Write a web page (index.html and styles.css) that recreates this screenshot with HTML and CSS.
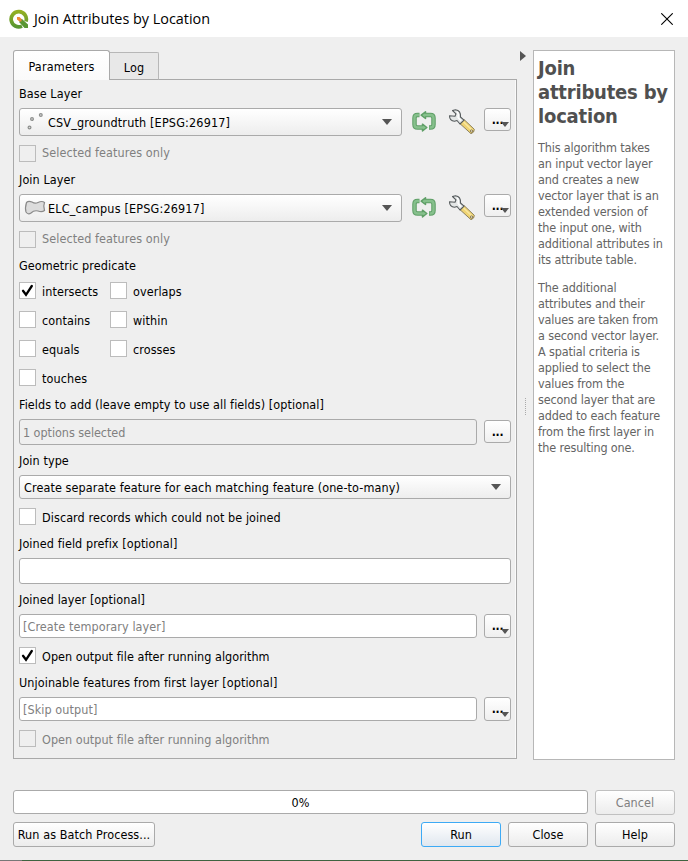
FILE: index.html
```html
<!DOCTYPE html>
<html lang="en">
<head>
<meta charset="utf-8">
<title>Join Attributes by Location</title>
<link rel="stylesheet" href="styles.css">
</head>
<body>
<svg width="0" height="0" class="defs">
  <defs>
    <linearGradient id="qg" x1="0" y1="0" x2="0" y2="1"><stop offset="0" stop-color="#93b023"/><stop offset="1" stop-color="#589632"/></linearGradient>
    <symbol id="cycle" viewBox="0 0 24 22">
      <g fill="none" stroke-linejoin="round">
        <path d="M7.500 4H5.500Q2.500 4 2.500 7V13.500Q2.500 16.500 5.500 16.500H10M17 16.500H18.500Q21.500 16.500 21.500 13.500V7Q21.500 4 18.500 4H14" stroke="#5f9f67" stroke-width="4.500"/>
        <path d="M13.500 .8V7.500L9.200 4.200ZM10.500 13.200V20L14.800 16.500Z" fill="#8bc791" stroke="#5f9f67" stroke-width="1.500"/>
        <path d="M7 4H5.500Q2.500 4 2.500 7V13.500Q2.500 16.500 5.500 16.500H12M17.500 16.500H18.500Q21.500 16.500 21.500 13.500V7Q21.500 4 18.500 4H12" stroke="#86c08c" stroke-width="2.400"/>
      </g>
    </symbol>
    <symbol id="wrench" viewBox="0 0 28 26">
      <path d="M11.800 14.500L16 10.500L26.300 20.300Q26.500 23.500 23 24.700Z" fill="#efd372" stroke="#8d8260" stroke-width="1"/>
      <path d="M15.500 13L24 21" stroke="#f8e7a0" stroke-width="1.500"/>
      <circle cx="23.500" cy="22" r="1.100" fill="#fff" stroke="#756842" stroke-width=".9"/>
      <path d="M4.500 1.500L8 4.800L7 7.300L1.500 6.800Q1.500 12 6.500 12.200L9 11.500L12 15L16 11.200L12.500 8Q13 1.500 7.500 .8Z" fill="#e3e6e6" stroke="#555a5c" stroke-width="1.100" stroke-linejoin="round"/>
      <path d="M9 3Q11 4.500 10 8.500L13 11.700" fill="none" stroke="#fff" stroke-width="1.300"/>
    </symbol>
    <symbol id="tick" viewBox="0 0 17 17"><path d="M4 8.800L7 12.800L12.800 4" fill="none" stroke="#000" stroke-width="2.300" stroke-linecap="round"/></symbol>
  </defs>
</svg>
<header class="titlebar">
  <svg class="logo" width="20" height="20" viewBox="0 0 20 20"><path d="M13 17.100A7.600 7.600 0 1 1 17 12.500" fill="none" stroke="url(#qg)" stroke-width="3.700"/><path d="M10.500 10.500L13 10L19 15.500V19H15.500L10.500 13.500Z" fill="#589632"/><path d="M8 8H10.500L12.500 10V12.500H10.500L8 10.500Z" fill="#ee8a35"/></svg>
  <h1 class="title">Join Attributes by Location</h1>
  <svg class="close" width="12" height="12" viewBox="0 0 12 12"><path d="M.3 .3L11.700 11.700M11.700 .3L.3 11.700" stroke="#000" stroke-width="1.100"/></svg>
</header>
<main class="content">
  <section class="left">
    <nav class="tabs"><div class="tab active">Parameters</div><div class="tab">Log</div></nav>
    <div class="panel">
      <div class="label base">Base Layer</div>
      <div class="row">
        <div class="combo layer"><svg width="24" height="20" viewBox="0 0 24 20"><g fill="#ddd" stroke="#8d8f8d" stroke-width="1.200"><circle cx="5.500" cy="14.500" r="1.400"/><circle cx="8" cy="6" r="1.400"/><circle cx="16.800" cy="2" r="1.400"/></g></svg><span>CSV_groundtruth [EPSG:26917]</span><i class="arrow"></i></div>
        <svg class="cycle" width="24" height="22"><use href="#cycle"/></svg><svg class="wrench" width="28" height="26"><use href="#wrench"/></svg>
        <button class="more">...<i></i></button>
      </div>
      <div class="check sel off"><b></b>Selected features only</div>
      <div class="label base">Join Layer</div>
      <div class="row">
        <div class="combo layer"><svg width="24" height="20" viewBox="0 0 24 20"><path d="M2.500 3.500Q4.500 1.500 8 3Q11 5 14 3.500Q18 1.500 20.500 3.500Q19 7 20.500 11.500Q18 13.500 14 12Q10 11 7 14Q4 16 2 13Q.8 9 2.500 3.500Z" fill="#dcdcdc" stroke="#8a8a8a" stroke-width="1.200"/></svg><span>ELC_campus [EPSG:26917]</span><i class="arrow"></i></div>
        <svg class="cycle" width="24" height="22"><use href="#cycle"/></svg><svg class="wrench" width="28" height="26"><use href="#wrench"/></svg>
        <button class="more">...<i></i></button>
      </div>
      <div class="check sel off"><b></b>Selected features only</div>
      <div class="label geo">Geometric predicate</div>
      <div class="predicates">
        <div class="check"><b><svg width="17" height="17"><use href="#tick"/></svg></b><span>intersects</span></div><div class="check"><b></b><span>overlaps</span></div>
        <div class="check"><b></b><span>contains</span></div><div class="check"><b></b><span>within</span></div>
        <div class="check"><b></b><span>equals</span></div><div class="check"><b></b><span>crosses</span></div>
        <div class="check"><b></b><span>touches</span></div>
      </div>
      <div class="label fields">Fields to add (leave empty to use all fields) [optional]</div>
      <div class="row"><div class="input disabled">1 options selected</div><button class="more plain">...</button></div>
      <div class="label mid">Join type</div>
      <div class="combo type"><span>Create separate feature for each matching feature (one-to-many)</span><i class="arrow"></i></div>
      <div class="check tall"><b></b><span>Discard records which could not be joined</span></div>
      <div class="label tight">Joined field prefix [optional]</div>
      <div class="input prefix"></div>
      <div class="label mid">Joined layer [optional]</div>
      <div class="row"><div class="input">[Create temporary layer]</div><button class="more">...<i></i></button></div>
      <div class="check tall open"><b><svg width="17" height="17"><use href="#tick"/></svg></b><span>Open output file after running algorithm</span></div>
      <div class="label tight">Unjoinable features from first layer [optional]</div>
      <div class="row"><div class="input">[Skip output]</div><button class="more">...<i></i></button></div>
      <div class="check tall open off"><b></b><span>Open output file after running algorithm</span></div>
    </div>
  </section>
  <div class="splitter"><i class="collapse"></i><i class="grip"></i></div>
  <aside class="help">
    <h2>Join<br>attributes by<br>location</h2>
    <p>This algorithm takes<br>an input vector layer<br>and creates a new<br>vector layer that is an<br>extended version of<br>the input one, with<br>additional attributes in<br>its attribute table.</p>
    <p>The additional<br>attributes and their<br>values are taken from<br>a second vector layer.<br>A spatial criteria is<br>applied to select the<br>values from the<br>second layer that are<br>added to each feature<br>from the first layer in<br>the resulting one.</p>
  </aside>
</main>
<footer class="footer">
  <div class="row"><div class="progress">0%</div><button class="btn cancel">Cancel</button></div>
  <div class="row actions"><button class="btn batch">Run as Batch Process...</button><button class="btn run">Run</button><button class="btn">Close</button><button class="btn">Help</button></div>
</footer>
<div class="edge"></div>
</body>
</html>
```

FILE: styles.css
```css
* { box-sizing: border-box; }
body { margin: 0; width: 688px; height: 861px; overflow: hidden; display: flex; flex-direction: column; background: #efefef; color: #000; font: 12.5px/16px "DejaVu Sans Condensed", "DejaVu Sans", sans-serif; font-stretch: condensed; letter-spacing: .08px; }
button { font: inherit; color: inherit; letter-spacing: inherit; padding: 0; margin: 0; }
svg { display: block; flex: none; }
.defs { position: absolute; }
.titlebar { height: 37px; flex: none; background: #fff; display: flex; align-items: center; padding: 0 15px 0 9px; }
.title { margin: 1px 0 0 5px; font: 400 14.4px/20px "Open Sans", sans-serif; letter-spacing: 0; }
.close { margin-left: auto; }
.content { height: 723px; flex: none; display: flex; padding: 13px 13px 0 13px; }
.left { width: 504px; flex: none; }
.tabs { display: flex; align-items: flex-end; height: 30px; position: relative; z-index: 1; }
.tab { height: 28px; width: 49px; border: 1px solid #b7b7b7; border-left: 0; border-bottom-color: #a9a9a9; border-radius: 0 2px 0 0; background: #e8e8e8; text-align: center; line-height: 29px; }
.tab.active { width: 97px; height: 30px; border: 1px solid #a9a9a9; border-bottom: 0; border-radius: 3px 3px 0 0; background: linear-gradient(#fff, #fafafa); line-height: 32px; letter-spacing: .18px; }
.panel { height: 680px; margin-top: -1px; padding: 0 5px; border: 1px solid #a9a9a9; box-shadow: inset -1px 0 #fafafa; }
.row { display: flex; align-items: flex-start; }
.label { white-space: nowrap; }
.base { height: 28px; line-height: 28px; }
.geo { height: 25px; line-height: 28px; }
.fields { height: 26px; line-height: 23px; }
.mid { height: 30px; line-height: 31px; }
.tight { height: 23px; line-height: 18px; }
.combo { position: relative; display: flex; align-items: center; border: 1px solid #aaa; border-radius: 3px; background: linear-gradient(#fff, #ededed); white-space: nowrap; }
.layer { width: 383px; height: 28px; padding: 1px 0 0 4px; letter-spacing: .17px; }
.type { width: 492px; height: 24px; padding: 1px 0 0 4px; letter-spacing: .1px; }
.arrow { position: absolute; right: 9px; top: 50%; margin-top: -3px; border: 5px solid transparent; border-top: 6px solid #555; border-bottom: 0; }
.cycle { margin: 3px 0 0 10px; }
.wrench { margin: 1px 0 0 12px; }
.more { position: relative; width: 27px; height: 24px; margin-left: 7px; border: 1px solid #aaa; border-radius: 3px; background: linear-gradient(#fff, #efefef); line-height: 20px; font-weight: bold; font-size: 12px; letter-spacing: -.2px; }
.layer ~ .more { height: 23px; margin-left: auto; }
.more.plain { height: 23px; margin-top: 1px; line-height: 22px; }
.more i { position: absolute; right: 1px; bottom: 3px; border: 4.5px solid transparent; border-top: 5px solid #555; border-bottom: 0; }
.check { display: flex; align-items: center; white-space: nowrap; }
.check b { width: 17px; height: 17px; margin-right: 6px; border: 1px solid #bcbcbc; background: #fff; }
.check b svg { margin: -1px; }
.check span { margin-top: 2px; }
.sel { height: 26px; margin-top: 4px; }
.predicates .check { padding-bottom: 2px; }
.tall { height: 36px; padding-bottom: 1px; }
.open { letter-spacing: .03px; }
.off { color: #808080; }
.off b { background: #efefef; }
.predicates { display: grid; grid-template-columns: 91px 100px; grid-auto-rows: 29px; }
.input { width: 458px; height: 24px; line-height: 24px; padding-left: 3px; border: 1px solid #aaa; border-radius: 3px; background: #fff; color: #808080; }
.disabled { height: 26px; line-height: 26px; background: #efefef; letter-spacing: -.05px; }
.prefix { width: 492px; height: 26px; }
.splitter { width: 16px; flex: none; position: relative; }
.collapse { position: absolute; left: 3px; top: 1px; border: 5px solid transparent; border-left: 6px solid #555; border-right: 0; }
.grip { position: absolute; left: 8px; top: 348px; height: 17px; border-left: 1px dotted #aaa; }
.help { width: 142px; height: 710px; padding: 5px 4px; background: #fff; border: 1px solid #b7b7b7; color: #646464; white-space: nowrap; letter-spacing: -.14px; }
.help h2 { margin: 0 0 12px; font-size: 20px; line-height: 24px; color: #505050; letter-spacing: -.2px; }
.help p { margin: 0 0 12px; }
.footer { padding: 30px 13px 0; height: 100px; flex: none; }
.progress { width: 575px; height: 24px; margin-right: 7px; border: 1px solid #aaa; border-radius: 3px; background: #fff; text-align: center; line-height: 23px; }
.btn { width: 80px; height: 25px; border: 1px solid #aaa; border-radius: 3px; background: linear-gradient(#fff, #ececec); line-height: 23px; white-space: nowrap; }
.cancel { color: #808080; border-color: #c0c0c0; }
.actions { margin-top: 7px; gap: 7px; }
.batch { width: 142px; margin-right: auto; }
.run { border-color: #3daaf5; background: linear-gradient(#fff, #e0e7ef); }
.edge { height: 1px; background: linear-gradient(90deg, #777 0 22px, #3f6340 22px); }
```
